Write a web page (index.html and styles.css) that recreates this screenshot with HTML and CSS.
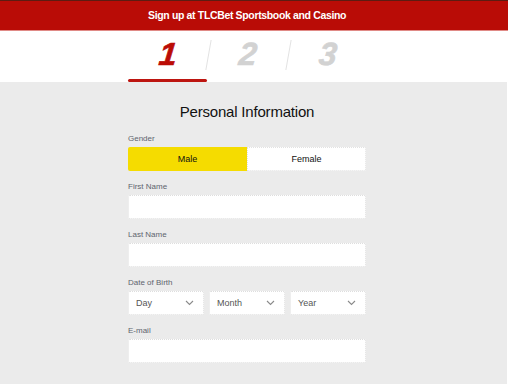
FILE: index.html
```html
<!DOCTYPE html>
<html>
<head>
<meta charset="utf-8">
<link rel="stylesheet" href="styles.css">
</head>
<body>
<div class="page">
  <header class="topbar">Sign up at TLCBet Sportsbook and Casino</header>
  <nav class="steps">
    <div class="step active"><span>1</span></div>
    <div class="step"><span>2</span></div>
    <div class="step"><span>3</span></div>
  </nav>
  <main class="content">
    <form class="form">
      <h1 class="title">Personal Information</h1>
      <div class="field">
        <label class="label">Gender</label>
        <div class="toggle">
          <div class="opt sel">Male</div>
          <div class="opt">Female</div>
        </div>
      </div>
      <div class="field">
        <label class="label">First Name</label>
        <div class="input"></div>
      </div>
      <div class="field">
        <label class="label">Last Name</label>
        <div class="input"></div>
      </div>
      <div class="field">
        <label class="label">Date of Birth</label>
        <div class="dob">
          <div class="select"><span>Day</span><svg width="9" height="6" viewBox="0 0 9 6"><path d="M1 1l3.5 3.5L8 1" fill="none" stroke="#8a8a8a" stroke-width="1.1"/></svg></div>
          <div class="select"><span>Month</span><svg width="9" height="6" viewBox="0 0 9 6"><path d="M1 1l3.5 3.5L8 1" fill="none" stroke="#8a8a8a" stroke-width="1.1"/></svg></div>
          <div class="select"><span>Year</span><svg width="9" height="6" viewBox="0 0 9 6"><path d="M1 1l3.5 3.5L8 1" fill="none" stroke="#8a8a8a" stroke-width="1.1"/></svg></div>
        </div>
      </div>
      <div class="field">
        <label class="label">E-mail</label>
        <div class="input"></div>
      </div>
    </form>
  </main>
</div>
</body>
</html>
```
FILE: styles.css
```css
* { box-sizing: border-box; }
html, body { margin: 0; padding: 0; background: #fff; }
body { font-family: "Liberation Sans", Arial, sans-serif; color: #111; }
.page { width: 508px; }
.topbar {
  height: 31px;
  background: #b90c06;
  border-top: 1px solid #5c1c12;
  border-bottom: 1px solid #e08a86;
  color: #fff;
  font-weight: bold;
  font-size: 10.5px;
  letter-spacing: -0.35px;
  display: flex;
  align-items: center;
  padding-left: 148px;
  padding-bottom: 1px;
}
.steps {
  height: 51px;
  display: flex;
  padding-left: 128px;
  background: #fff;
}
.step {
  width: 80px;
  position: relative;
  display: flex;
  justify-content: center;
  align-items: center;
  padding-bottom: 4px;
}
.step span {
  font-family: "Liberation Sans", Arial, sans-serif;
  font-weight: bold;
  font-style: italic;
  font-size: 32px;
  color: #d2d2d2;
  transform: skewX(-6deg);
  -webkit-text-stroke: 0.6px currentColor;
}
.step.active span { color: #bb0c06; }
.step.active::after {
  content: "";
  position: absolute;
  left: 0; right: 1px; bottom: 0;
  height: 3px;
  border-radius: 2px;
  background: #bd1510;
}
.step + .step::before {
  content: "";
  position: absolute;
  left: 0; top: 9px;
  width: 1px; height: 30px;
  background: #e2e2e2;
  transform: skewX(-10deg);
}
.content {
  background: #ebebeb;
  width: 507px;
  height: 302px;
  display: flex;
  padding-left: 128px;
}
.form { width: 238px; display: flex; flex-direction: column; }
.title {
  margin: 19px 0 11px;
  text-align: center;
  font-weight: normal;
  font-size: 15px;
  letter-spacing: -0.2px;
  color: #111;
  line-height: 22px;
}
.field { margin-bottom: 11px; }
.label {
  display: block;
  font-size: 8px;
  color: #60646e;
  line-height: 10px;
  margin-bottom: 3px;
}
.toggle { display: flex; height: 24px; }
.opt {
  flex: 1;
  display: flex; align-items: center; justify-content: center;
  font-size: 9px;
  background: #fff;
  border: 1px dotted #e2e2e2;
  border-radius: 0 2px 2px 0;
  color: #111;
}
.opt.sel { background: #f5dc00; border-color: #f5dc00; border-radius: 2px 0 0 2px; }
.input {
  height: 24px;
  background: #fff;
  border: 1px dotted #dedede;
  border-radius: 2px;
}
.dob { display: flex; gap: 5px; }
.select {
  flex: 1;
  height: 24px;
  background: #fff;
  border: 1px dotted #dedede;
  border-radius: 2px;
  display: flex;
  align-items: center;
  justify-content: space-between;
  padding: 0 9px 0 7px;
  font-size: 9px;
  color: #555;
}
```
